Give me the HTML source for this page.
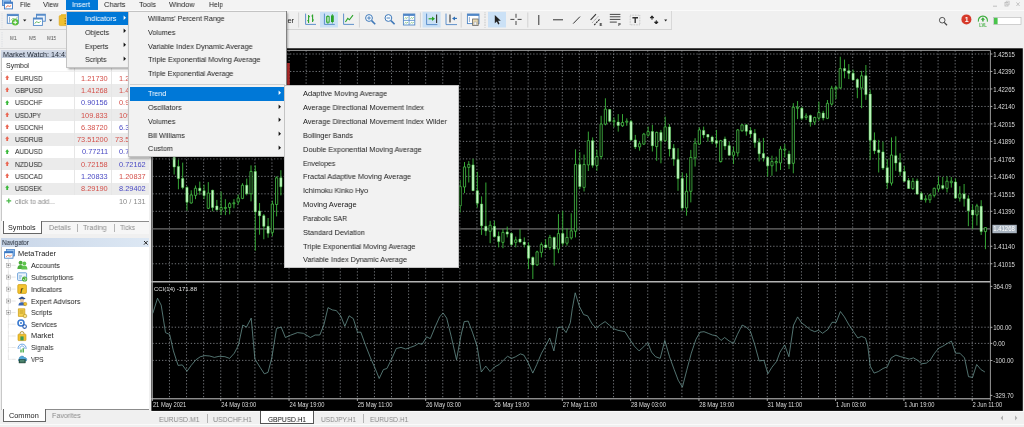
<!DOCTYPE html>
<html><head><meta charset="utf-8"><title>MetaTrader 5 - Insert Indicators Trend</title>
<style>
html,body{margin:0;padding:0}
body{width:1024px;height:427px;position:relative;overflow:hidden;background:#f0f0f0;font-family:"Liberation Sans",sans-serif;}
.t{position:absolute;white-space:nowrap;transform-origin:0 50%;display:block;will-change:transform}
.b{position:absolute;box-sizing:border-box}
svg{position:absolute;left:0;top:0;overflow:visible}
.menu{background:#f2f2f2;border:0.6px solid #c4c4c4;box-shadow:1.8px 1.8px 2.2px rgba(0,0,0,0.38)}
.hl{background:#0078d7}
</style></head><body>

<svg id="chart" width="1024" height="427" viewBox="0 0 1024 427" font-family="Liberation Sans, sans-serif">
<rect x="151.4" y="48.3" width="871.4" height="362.6" fill="#000"/>
<path d="M169.48 50.4 V398.8 M186.56 50.4 V398.8 M203.64 50.4 V398.8 M220.72 50.4 V398.8 M237.80 50.4 V398.8 M254.88 50.4 V398.8 M271.96 50.4 V398.8 M289.04 50.4 V398.8 M306.12 50.4 V398.8 M323.20 50.4 V398.8 M340.28 50.4 V398.8 M357.36 50.4 V398.8 M374.44 50.4 V398.8 M391.52 50.4 V398.8 M408.60 50.4 V398.8 M425.68 50.4 V398.8 M442.76 50.4 V398.8 M459.84 50.4 V398.8 M476.92 50.4 V398.8 M494.00 50.4 V398.8 M511.08 50.4 V398.8 M528.16 50.4 V398.8 M545.24 50.4 V398.8 M562.32 50.4 V398.8 M579.40 50.4 V398.8 M596.48 50.4 V398.8 M613.56 50.4 V398.8 M630.64 50.4 V398.8 M647.72 50.4 V398.8 M664.80 50.4 V398.8 M681.88 50.4 V398.8 M698.96 50.4 V398.8 M716.04 50.4 V398.8 M733.12 50.4 V398.8 M750.20 50.4 V398.8 M767.28 50.4 V398.8 M784.36 50.4 V398.8 M801.44 50.4 V398.8 M818.52 50.4 V398.8 M835.60 50.4 V398.8 M852.68 50.4 V398.8 M869.76 50.4 V398.8 M886.84 50.4 V398.8 M903.92 50.4 V398.8 M921.00 50.4 V398.8 M938.08 50.4 V398.8 M955.16 50.4 V398.8 M972.24 50.4 V398.8 M152.4 54.00 H990.4 M152.4 71.48 H990.4 M152.4 88.96 H990.4 M152.4 106.44 H990.4 M152.4 123.92 H990.4 M152.4 141.40 H990.4 M152.4 158.88 H990.4 M152.4 176.36 H990.4 M152.4 193.84 H990.4 M152.4 211.32 H990.4 M152.4 246.28 H990.4 M152.4 263.76 H990.4 M152.4 327.2 H990.4 M152.4 343.4 H990.4 M152.4 360.4 H990.4" stroke="#84888c" stroke-width="0.85" stroke-dasharray="1.3 1.9" fill="none"/>
<path d="M152.4 398.8 V50.4 H990.4 V400.8" stroke="#a8a8a8" stroke-width="0.9" fill="none"/>
<path d="M151.4 281.8 H990.4" stroke="#b4b4b4" stroke-width="1.6" fill="none"/>
<path d="M151.4 398.8 H990.4" stroke="#c8c8c8" stroke-width="1" fill="none"/>
<path d="M152.4 228.9 H990.4" stroke="#6e6e6e" stroke-width="1.1" fill="none"/>
<path d="M174.15 150.0 V174.5 M178.42 159.6 V189.3 M182.69 162.6 V189.3 M186.96 186.2 V210.6 M191.23 190.3 V203.7 M195.50 185.5 V199.2 M199.77 181.6 V194.9 M204.04 184.7 V199.2 M208.31 182.1 V209.1 M212.58 189.7 V211.3 M216.85 199.9 V210.6 M221.12 191.5 V215.1 M225.39 199.2 V215.1 M229.66 202.2 V214.4 M233.93 199.2 V208.3 M238.20 194.6 V204.5 M242.47 183.2 V199.2 M246.74 178.6 V195.4 M251.01 165.4 V201.4 M255.28 165.4 V250.7 M259.55 203.0 V234.7 M263.82 214.0 V239.3 M268.09 218.0 V237.7 M272.36 200.7 V236.2 M276.63 176.3 V216.4 M280.90 170.2 V195.4 M460.24 180.0 V212.5 M464.51 162.0 V193.1 M468.78 161.1 V182.5 M473.05 158.7 V190.7 M477.32 171.8 V207.5 M481.59 196.4 V234.9 M485.86 182.5 V235.8 M490.13 220.8 V243.2 M494.40 220.8 V237.4 M498.67 231.6 V247.4 M502.94 229.1 V248.2 M507.21 226.6 V237.4 M511.48 232.4 V245.7 M515.75 236.6 V247.4 M520.02 229.1 V243.2 M524.29 237.4 V247.4 M528.56 242.4 V269.0 M532.83 256.5 V279.0 M537.10 250.7 V266.0 M541.37 242.4 V257.4 M545.64 239.1 V248.2 M549.91 234.9 V249.9 M554.18 236.6 V265.7 M558.45 214.1 V253.2 M562.72 210.8 V245.7 M566.99 228.3 V245.7 M571.26 213.3 V239.6 M575.53 149.3 V237.4 M579.80 152.1 V189.0 M584.07 154.6 V191.5 M588.34 131.6 V171.0 M592.61 137.4 V167.7 M596.88 149.8 V170.8 M601.15 115.8 V159.0 M605.42 98.3 V125.3 M609.69 109.1 V122.4 M613.96 117.4 V127.4 M618.23 114.1 V131.6 M622.50 114.1 V126.9 M626.77 118.3 V125.8 M631.04 119.9 V140.7 M635.31 134.9 V149.0 M639.58 141.6 V150.7 M643.85 132.9 V144.9 M648.12 126.6 V136.6 M652.39 124.9 V151.5 M656.66 131.6 V160.8 M660.93 129.9 V163.3 M665.20 116.6 V141.6 M669.47 124.1 V156.5 M673.74 144.1 V165.8 M678.01 148.2 V190.8 M682.28 172.5 V210.7 M686.55 173.3 V215.7 M690.82 149.9 V202.4 M695.09 138.2 V166.6 M699.36 127.4 V144.9 M703.63 126.6 V138.2 M707.90 134.1 V141.6 M712.17 135.7 V144.1 M716.44 129.9 V147.4 M720.71 139.9 V162.5 M724.98 136.6 V149.9 M729.25 141.6 V155.7 M733.52 146.6 V164.1 M737.79 129.1 V156.6 M742.06 124.1 V131.6 M746.33 124.1 V135.7 M750.60 127.4 V137.4 M754.87 129.1 V147.8 M759.14 138.3 V161.5 M763.41 137.9 V161.5 M767.68 156.6 V176.6 M771.95 155.7 V175.8 M776.22 156.6 V171.6 M780.49 146.2 V170.0 M784.76 144.1 V157.4 M789.03 150.7 V169.1 M793.30 103.1 V173.3 M797.57 101.0 V119.1 M801.84 106.7 V120.1 M806.11 113.3 V120.0 M810.38 114.6 V126.6 M814.65 116.6 V125.0 M818.92 101.7 V120.8 M823.19 110.8 V120.4 M827.46 100.0 V119.1 M831.73 85.8 V105.7 M836.00 85.8 V99.1 M840.27 56.7 V89.1 M844.54 59.6 V78.3 M848.81 64.1 V79.1 M853.08 69.6 V80.3 M857.35 78.3 V98.2 M861.62 70.8 V108.2 M865.89 65.0 V99.9 M870.16 89.9 V159.9 M874.43 132.4 V154.1 M878.70 139.9 V172.5 M882.97 141.6 V170.0 M887.24 159.0 V188.7 M891.51 137.4 V185.6 M895.78 136.3 V170.8 M900.05 153.2 V175.8 M904.32 165.8 V181.8 M908.59 178.0 V189.0 M912.86 178.0 V189.8 M917.13 178.7 V194.8 M921.40 191.8 V200.2 M925.67 195.3 V202.6 M929.94 193.9 V203.0 M934.21 187.6 V197.4 M938.48 176.3 V191.8 M942.75 177.0 V189.7 M947.02 176.3 V192.5 M951.29 177.0 V187.6 M955.56 178.4 V198.8 M959.83 186.2 V201.6 M964.10 184.0 V206.6 M968.37 195.3 V226.2 M972.64 204.5 V229.0 M976.91 203.8 V225.5 M981.18 200.2 V235.0 M985.45 227.0 V249.2" stroke="#38b038" stroke-width="0.95" fill="none"/>
<path d="M190.13 194.9 h2.2 V203.0 h-2.2 Z M194.40 188.2 h2.2 V195.4 h-2.2 Z M207.21 193.1 h2.2 V208.3 h-2.2 Z M220.02 207.5 h2.2 V210.1 h-2.2 Z M224.29 207.4 h2.2 V208.4 h-2.2 Z M228.56 203.7 h2.2 V207.5 h-2.2 Z M232.83 202.8 h2.2 V203.8 h-2.2 Z M237.10 198.1 h2.2 V201.9 h-2.2 Z M241.37 185.2 h2.2 V198.4 h-2.2 Z M249.91 171.4 h2.2 V193.8 h-2.2 Z M271.26 204.0 h2.2 V232.4 h-2.2 Z M275.53 177.8 h2.2 V204.5 h-2.2 Z M459.14 186.6 h2.2 V205.8 h-2.2 Z M463.41 166.9 h2.2 V187.0 h-2.2 Z M467.68 164.4 h2.2 V167.4 h-2.2 Z M489.03 225.3 h2.2 V231.3 h-2.2 Z M501.84 232.4 h2.2 V242.4 h-2.2 Z M514.65 239.9 h2.2 V242.4 h-2.2 Z M536.00 251.9 h2.2 V264.9 h-2.2 Z M540.27 244.6 h2.2 V252.4 h-2.2 Z M548.81 237.4 h2.2 V247.4 h-2.2 Z M557.35 233.6 h2.2 V249.1 h-2.2 Z M565.89 237.4 h2.2 V243.2 h-2.2 Z M570.16 230.8 h2.2 V237.9 h-2.2 Z M574.43 164.4 h2.2 V231.3 h-2.2 Z M582.97 164.4 h2.2 V187.4 h-2.2 Z M587.24 140.7 h2.2 V164.9 h-2.2 Z M595.78 156.5 h2.2 V165.5 h-2.2 Z M600.05 124.1 h2.2 V156.5 h-2.2 Z M604.32 109.1 h2.2 V124.1 h-2.2 Z M612.86 120.7 h2.2 V121.7 h-2.2 Z M621.40 122.4 h2.2 V125.8 h-2.2 Z M625.67 121.2 h2.2 V122.2 h-2.2 Z M638.48 143.7 h2.2 V146.9 h-2.2 Z M642.75 134.1 h2.2 V144.1 h-2.2 Z M647.02 131.6 h2.2 V135.2 h-2.2 Z M655.56 132.4 h2.2 V146.6 h-2.2 Z M664.10 126.9 h2.2 V140.7 h-2.2 Z M685.45 191.3 h2.2 V207.9 h-2.2 Z M689.72 157.4 h2.2 V191.3 h-2.2 Z M693.99 143.2 h2.2 V157.8 h-2.2 Z M698.26 129.9 h2.2 V144.1 h-2.2 Z M719.61 140.7 h2.2 V161.6 h-2.2 Z M732.42 151.8 h2.2 V155.3 h-2.2 Z M736.69 129.9 h2.2 V152.9 h-2.2 Z M740.96 124.9 h2.2 V130.8 h-2.2 Z M770.85 161.6 h2.2 V165.8 h-2.2 Z M775.12 161.5 h2.2 V162.9 h-2.2 Z M779.39 149.1 h2.2 V162.9 h-2.2 Z M783.66 149.0 h2.2 V150.0 h-2.2 Z M792.20 107.2 h2.2 V163.3 h-2.2 Z M796.47 107.2 h2.2 V108.3 h-2.2 Z M805.01 116.0 h2.2 V117.5 h-2.2 Z M813.55 117.5 h2.2 V122.0 h-2.2 Z M817.82 112.5 h2.2 V118.1 h-2.2 Z M826.36 103.3 h2.2 V118.3 h-2.2 Z M830.63 88.3 h2.2 V104.1 h-2.2 Z M834.90 87.4 h2.2 V88.6 h-2.2 Z M839.17 68.6 h2.2 V87.9 h-2.2 Z M860.52 75.8 h2.2 V87.9 h-2.2 Z M890.41 155.0 h2.2 V183.1 h-2.2 Z M911.76 181.4 h2.2 V188.6 h-2.2 Z M924.57 198.8 h2.2 V199.8 h-2.2 Z M928.84 195.0 h2.2 V199.8 h-2.2 Z M933.11 188.3 h2.2 V195.3 h-2.2 Z M937.38 184.8 h2.2 V189.0 h-2.2 Z M945.92 181.2 h2.2 V188.3 h-2.2 Z M950.19 181.2 h2.2 V182.7 h-2.2 Z M958.73 193.9 h2.2 V198.1 h-2.2 Z M975.81 205.9 h2.2 V215.0 h-2.2 Z M984.35 227.6 h2.2 V231.6 h-2.2 Z" stroke="#4ccc4c" stroke-width="0.75" fill="#000"/>
<path d="M173.05 150.0 h2.2 V166.9 h-2.2 Z M177.32 166.4 h2.2 V178.6 h-2.2 Z M181.59 178.6 h2.2 V187.4 h-2.2 Z M185.86 187.4 h2.2 V202.2 h-2.2 Z M198.67 188.2 h2.2 V190.8 h-2.2 Z M202.94 190.8 h2.2 V195.4 h-2.2 Z M211.48 190.3 h2.2 V207.5 h-2.2 Z M215.75 206.0 h2.2 V209.8 h-2.2 Z M245.64 185.2 h2.2 V193.8 h-2.2 Z M254.18 171.4 h2.2 V211.9 h-2.2 Z M258.45 211.0 h2.2 V215.7 h-2.2 Z M262.72 215.7 h2.2 V226.3 h-2.2 Z M266.99 226.3 h2.2 V233.2 h-2.2 Z M279.80 177.8 h2.2 V186.7 h-2.2 Z M471.95 164.9 h2.2 V190.7 h-2.2 Z M476.22 190.7 h2.2 V203.3 h-2.2 Z M480.49 204.1 h2.2 V225.8 h-2.2 Z M484.76 226.3 h2.2 V230.8 h-2.2 Z M493.30 226.3 h2.2 V236.6 h-2.2 Z M497.57 236.3 h2.2 V241.6 h-2.2 Z M506.11 231.9 h2.2 V234.1 h-2.2 Z M510.38 233.6 h2.2 V244.6 h-2.2 Z M518.92 239.1 h2.2 V241.9 h-2.2 Z M523.19 242.1 h2.2 V244.6 h-2.2 Z M527.46 245.7 h2.2 V258.2 h-2.2 Z M531.73 257.4 h2.2 V264.9 h-2.2 Z M544.54 244.9 h2.2 V247.4 h-2.2 Z M553.08 237.4 h2.2 V249.1 h-2.2 Z M561.62 233.6 h2.2 V243.2 h-2.2 Z M578.70 164.4 h2.2 V186.6 h-2.2 Z M591.51 140.7 h2.2 V165.2 h-2.2 Z M608.59 109.6 h2.2 V121.3 h-2.2 Z M617.13 122.1 h2.2 V125.4 h-2.2 Z M629.94 121.6 h2.2 V139.9 h-2.2 Z M634.21 139.9 h2.2 V146.9 h-2.2 Z M651.29 131.6 h2.2 V145.7 h-2.2 Z M659.83 132.4 h2.2 V140.7 h-2.2 Z M668.37 126.9 h2.2 V149.0 h-2.2 Z M672.64 148.2 h2.2 V159.1 h-2.2 Z M676.91 159.6 h2.2 V178.6 h-2.2 Z M681.18 178.6 h2.2 V207.9 h-2.2 Z M702.53 130.4 h2.2 V134.9 h-2.2 Z M706.80 134.6 h2.2 V137.1 h-2.2 Z M711.07 137.1 h2.2 V141.6 h-2.2 Z M715.34 140.7 h2.2 V143.2 h-2.2 Z M723.88 139.1 h2.2 V146.1 h-2.2 Z M728.15 145.7 h2.2 V155.2 h-2.2 Z M745.23 124.9 h2.2 V131.3 h-2.2 Z M749.50 130.5 h2.2 V133.9 h-2.2 Z M753.77 133.3 h2.2 V142.6 h-2.2 Z M758.04 142.4 h2.2 V153.8 h-2.2 Z M762.31 153.6 h2.2 V157.9 h-2.2 Z M766.58 157.4 h2.2 V165.8 h-2.2 Z M787.93 154.1 h2.2 V164.1 h-2.2 Z M800.74 108.3 h2.2 V118.3 h-2.2 Z M809.28 115.6 h2.2 V122.0 h-2.2 Z M822.09 113.1 h2.2 V118.0 h-2.2 Z M843.44 68.6 h2.2 V70.8 h-2.2 Z M847.71 70.8 h2.2 V73.3 h-2.2 Z M851.98 73.3 h2.2 V79.9 h-2.2 Z M856.25 79.6 h2.2 V87.4 h-2.2 Z M864.79 75.8 h2.2 V94.6 h-2.2 Z M869.06 94.1 h2.2 V140.2 h-2.2 Z M873.33 140.2 h2.2 V150.7 h-2.2 Z M877.60 149.9 h2.2 V152.4 h-2.2 Z M881.87 151.9 h2.2 V168.1 h-2.2 Z M886.14 167.7 h2.2 V182.8 h-2.2 Z M894.68 155.7 h2.2 V163.0 h-2.2 Z M898.95 162.5 h2.2 V171.8 h-2.2 Z M903.22 171.6 h2.2 V181.2 h-2.2 Z M907.49 180.6 h2.2 V188.5 h-2.2 Z M916.03 180.9 h2.2 V194.0 h-2.2 Z M920.30 193.6 h2.2 V199.5 h-2.2 Z M941.65 185.5 h2.2 V188.3 h-2.2 Z M954.46 182.0 h2.2 V198.1 h-2.2 Z M963.00 193.9 h2.2 V198.8 h-2.2 Z M967.27 198.8 h2.2 V210.8 h-2.2 Z M971.54 210.1 h2.2 V215.0 h-2.2 Z M980.08 206.3 h2.2 V231.6 h-2.2 Z" stroke="#5cd85c" stroke-width="0.5" fill="#c6f8c6"/>
<polyline points="152.8,313.4 157.5,298.2 161.2,305.2 165.5,332.6 169.7,334.5 173.4,350.9 178.1,365.4 182.3,364.9 187.0,371.3 191.2,365.4 195.9,359.8 200.4,356.7 205.0,355.6 209.7,356.0 214.4,357.4 219.1,356.3 224.9,356.7 229.6,358.4 234.3,353.2 238.5,345.0 242.7,325.1 246.5,327.0 251.2,318.1 254.9,359.1 260.1,367.3 264.3,373.8 268.0,372.4 271.8,357.9 276.5,328.6 281.1,327.0 285.4,337.5 290.5,335.2 297.5,332.6 303.4,333.3 310.4,337.5 315.1,335.0 319.8,335.0 323.8,325.1 328.0,307.6 332.2,309.9 336.4,310.6 340.9,316.2 344.8,326.3 349.1,315.8 353.3,318.6 357.5,332.2 360.8,332.2 365.9,346.2 370.5,357.9 375.2,368.5 379.2,378.5 383.4,369.6 386.9,368.5 391.6,359.1 396.3,348.5 401.0,347.4 405.7,349.0 410.4,347.4 415.0,345.7 418.5,343.4 422.1,344.3 426.7,336.8 430.3,338.7 434.9,327.5 439.6,316.9 443.1,313.0 446.7,318.1 451.3,336.8 456.5,359.8 460.7,336.8 464.2,321.6 468.2,321.1 472.4,332.2 477.1,346.2 481.3,372.0 485.8,366.1 490.0,371.5 494.7,366.8 499.3,364.5 503.3,360.3 507.5,356.3 511.8,358.4 515.7,356.7 520.4,353.9 523.9,355.1 528.1,362.6 532.8,373.1 536.8,364.5 541.5,353.2 546.2,345.0 549.7,338.0 553.9,350.9 557.9,327.5 561.9,327.0 566.1,332.6 570.3,322.8 572.3,308.7 575.2,292.8 579.4,306.4 583.6,314.6 587.6,315.8 592.2,324.0 596.2,328.2 600.4,324.7 605.1,321.6 609.3,325.1 613.3,328.6 618.0,330.3 625.0,331.7 629.7,339.2 634.4,346.2 639.1,350.9 643.8,346.7 647.8,342.7 651.5,352.1 655.5,356.7 660.2,358.4 664.8,340.4 669.5,356.7 674.2,369.6 678.2,380.2 682.4,387.2 686.6,370.8 691.3,353.2 696.0,339.2 700.0,332.2 704.0,331.7 708.2,333.3 712.4,335.0 716.4,335.7 721.1,340.4 724.6,337.5 729.3,341.1 733.5,343.4 737.4,334.5 742.1,325.1 746.1,327.0 750.3,331.0 754.5,343.9 759.2,361.0 763.9,360.3 767.9,373.8 771.9,367.3 776.6,361.4 780.0,352.1 784.7,345.0 788.9,356.7 793.6,325.1 797.6,316.9 801.5,322.8 806.2,326.3 810.4,329.8 814.7,331.7 818.6,330.3 822.6,333.3 828.0,329.3 832.0,322.3 836.2,322.3 840.4,311.5 844.4,316.9 849.1,325.1 853.8,332.2 857.8,338.0 861.5,336.4 865.5,338.0 867.8,346.2 870.2,366.1 874.1,373.1 878.4,371.5 883.0,368.5 887.3,366.8 891.2,357.9 895.9,355.1 900.6,356.7 905.3,357.9 909.3,359.1 913.5,357.9 917.7,360.3 921.7,363.8 926.4,363.1 930.4,359.8 934.6,353.2 938.8,348.1 942.8,346.2 947.4,343.4 951.4,341.1 955.6,353.2 959.9,353.2 964.5,357.9 968.5,376.7 972.5,377.4 976.7,364.5 980.9,369.6 984.9,372.0" stroke="#6e9894" stroke-width="0.75" fill="none" stroke-linejoin="round"/>
<rect x="286.4" y="63" width="3.3" height="21.8" fill="#b82c2c"/>
</svg>
<svg id="chartlabels" style="will-change:transform" width="1024" height="427" viewBox="0 0 1024 427" font-family="Liberation Sans, sans-serif">
<path d="M990.4 54.00 h2" stroke="#ccc" stroke-width="0.8"/>
<text x="993.2" y="56.90" font-size="6.6" fill="#dcdcdc" textLength="21.6" lengthAdjust="spacingAndGlyphs">1.42515</text>
<path d="M990.4 71.48 h2" stroke="#ccc" stroke-width="0.8"/>
<text x="993.2" y="74.38" font-size="6.6" fill="#dcdcdc" textLength="21.6" lengthAdjust="spacingAndGlyphs">1.42390</text>
<path d="M990.4 88.96 h2" stroke="#ccc" stroke-width="0.8"/>
<text x="993.2" y="91.86" font-size="6.6" fill="#dcdcdc" textLength="21.6" lengthAdjust="spacingAndGlyphs">1.42265</text>
<path d="M990.4 106.44 h2" stroke="#ccc" stroke-width="0.8"/>
<text x="993.2" y="109.34" font-size="6.6" fill="#dcdcdc" textLength="21.6" lengthAdjust="spacingAndGlyphs">1.42140</text>
<path d="M990.4 123.92 h2" stroke="#ccc" stroke-width="0.8"/>
<text x="993.2" y="126.82" font-size="6.6" fill="#dcdcdc" textLength="21.6" lengthAdjust="spacingAndGlyphs">1.42015</text>
<path d="M990.4 141.40 h2" stroke="#ccc" stroke-width="0.8"/>
<text x="993.2" y="144.30" font-size="6.6" fill="#dcdcdc" textLength="21.6" lengthAdjust="spacingAndGlyphs">1.41890</text>
<path d="M990.4 158.88 h2" stroke="#ccc" stroke-width="0.8"/>
<text x="993.2" y="161.78" font-size="6.6" fill="#dcdcdc" textLength="21.6" lengthAdjust="spacingAndGlyphs">1.41765</text>
<path d="M990.4 176.36 h2" stroke="#ccc" stroke-width="0.8"/>
<text x="993.2" y="179.26" font-size="6.6" fill="#dcdcdc" textLength="21.6" lengthAdjust="spacingAndGlyphs">1.41640</text>
<path d="M990.4 193.84 h2" stroke="#ccc" stroke-width="0.8"/>
<text x="993.2" y="196.74" font-size="6.6" fill="#dcdcdc" textLength="21.6" lengthAdjust="spacingAndGlyphs">1.41515</text>
<path d="M990.4 211.32 h2" stroke="#ccc" stroke-width="0.8"/>
<text x="993.2" y="214.22" font-size="6.6" fill="#dcdcdc" textLength="21.6" lengthAdjust="spacingAndGlyphs">1.41390</text>
<path d="M990.4 246.28 h2" stroke="#ccc" stroke-width="0.8"/>
<text x="993.2" y="249.18" font-size="6.6" fill="#dcdcdc" textLength="21.6" lengthAdjust="spacingAndGlyphs">1.41140</text>
<path d="M990.4 263.76 h2" stroke="#ccc" stroke-width="0.8"/>
<text x="993.2" y="266.66" font-size="6.6" fill="#dcdcdc" textLength="21.6" lengthAdjust="spacingAndGlyphs">1.41015</text>
<rect x="992.4" y="224.8" width="24.4" height="8.4" fill="#a9b4c0"/>
<text x="993.2" y="231.4" font-size="6.6" fill="#fff" textLength="21.6" lengthAdjust="spacingAndGlyphs">1.41268</text>
<path d="M990.4 286.40 h2" stroke="#ccc" stroke-width="0.8"/>
<text x="993.2" y="288.80" font-size="6.6" fill="#dcdcdc" textLength="18.5" lengthAdjust="spacingAndGlyphs">364.09</text>
<path d="M990.4 327.30 h2" stroke="#ccc" stroke-width="0.8"/>
<text x="993.2" y="329.70" font-size="6.6" fill="#dcdcdc" textLength="18.5" lengthAdjust="spacingAndGlyphs">100.00</text>
<path d="M990.4 343.40 h2" stroke="#ccc" stroke-width="0.8"/>
<text x="993.2" y="345.80" font-size="6.6" fill="#dcdcdc" textLength="11.8" lengthAdjust="spacingAndGlyphs">0.00</text>
<path d="M990.4 360.50 h2" stroke="#ccc" stroke-width="0.8"/>
<text x="993.2" y="362.90" font-size="6.6" fill="#dcdcdc" textLength="20.5" lengthAdjust="spacingAndGlyphs">-100.00</text>
<path d="M990.4 395.40 h2" stroke="#ccc" stroke-width="0.8"/>
<text x="993.2" y="397.80" font-size="6.6" fill="#dcdcdc" textLength="20.5" lengthAdjust="spacingAndGlyphs">-329.70</text>
<text x="154" y="291.4" font-size="6.2" fill="#e0e0e0" textLength="43" lengthAdjust="spacingAndGlyphs">CCI(14) -171.88</text>
<path d="M152.40 398.8 v2.2" stroke="#ccc" stroke-width="0.8"/>
<text x="152.9" y="407" font-size="6.4" fill="#dcdcdc" textLength="33.4" lengthAdjust="spacingAndGlyphs">21 May 2021</text>
<path d="M220.72 398.8 v2.2" stroke="#ccc" stroke-width="0.8"/>
<text x="221.2" y="407" font-size="6.4" fill="#dcdcdc" textLength="35.0" lengthAdjust="spacingAndGlyphs">24 May 03:00</text>
<path d="M289.04 398.8 v2.2" stroke="#ccc" stroke-width="0.8"/>
<text x="289.5" y="407" font-size="6.4" fill="#dcdcdc" textLength="35.0" lengthAdjust="spacingAndGlyphs">24 May 19:00</text>
<path d="M357.36 398.8 v2.2" stroke="#ccc" stroke-width="0.8"/>
<text x="357.8" y="407" font-size="6.4" fill="#dcdcdc" textLength="34.6" lengthAdjust="spacingAndGlyphs">25 May 11:00</text>
<path d="M425.68 398.8 v2.2" stroke="#ccc" stroke-width="0.8"/>
<text x="426.1" y="407" font-size="6.4" fill="#dcdcdc" textLength="35.0" lengthAdjust="spacingAndGlyphs">26 May 03:00</text>
<path d="M494.00 398.8 v2.2" stroke="#ccc" stroke-width="0.8"/>
<text x="494.4" y="407" font-size="6.4" fill="#dcdcdc" textLength="35.0" lengthAdjust="spacingAndGlyphs">26 May 19:00</text>
<path d="M562.32 398.8 v2.2" stroke="#ccc" stroke-width="0.8"/>
<text x="562.7" y="407" font-size="6.4" fill="#dcdcdc" textLength="34.6" lengthAdjust="spacingAndGlyphs">27 May 11:00</text>
<path d="M630.64 398.8 v2.2" stroke="#ccc" stroke-width="0.8"/>
<text x="631.0" y="407" font-size="6.4" fill="#dcdcdc" textLength="35.0" lengthAdjust="spacingAndGlyphs">28 May 03:00</text>
<path d="M698.96 398.8 v2.2" stroke="#ccc" stroke-width="0.8"/>
<text x="699.3" y="407" font-size="6.4" fill="#dcdcdc" textLength="35.0" lengthAdjust="spacingAndGlyphs">28 May 19:00</text>
<path d="M767.28 398.8 v2.2" stroke="#ccc" stroke-width="0.8"/>
<text x="767.6" y="407" font-size="6.4" fill="#dcdcdc" textLength="34.6" lengthAdjust="spacingAndGlyphs">31 May 11:00</text>
<path d="M835.60 398.8 v2.2" stroke="#ccc" stroke-width="0.8"/>
<text x="835.9" y="407" font-size="6.4" fill="#dcdcdc" textLength="30.2" lengthAdjust="spacingAndGlyphs">1 Jun 03:00</text>
<path d="M903.92 398.8 v2.2" stroke="#ccc" stroke-width="0.8"/>
<text x="904.2" y="407" font-size="6.4" fill="#dcdcdc" textLength="30.2" lengthAdjust="spacingAndGlyphs">1 Jun 19:00</text>
<path d="M972.24 398.8 v2.2" stroke="#ccc" stroke-width="0.8"/>
<text x="972.5" y="407" font-size="6.4" fill="#dcdcdc" textLength="29.8" lengthAdjust="spacingAndGlyphs">2 Jun 11:00</text>
</svg>
<div class="b " style="left:0.00px;top:0.00px;width:1024.00px;height:10.50px;background:#f3f3f3"></div>
<div class="b " style="left:0.00px;top:10.30px;width:1024.00px;height:0.60px;background:#fafafa"></div>
<div class="b hl" style="left:66.00px;top:0.00px;width:31.70px;height:10.40px;"></div>
<span class="t" style="left:20.00px;top:0.31px;font-size:7.6px;line-height:9.12px;color:#222;transform:scaleX(0.8574);">File</span>
<span class="t" style="left:43.00px;top:0.31px;font-size:7.6px;line-height:9.12px;color:#222;transform:scaleX(0.9488);">View</span>
<span class="t" style="left:72.00px;top:0.31px;font-size:7.6px;line-height:9.12px;color:#fff;transform:scaleX(0.9470);">Insert</span>
<span class="t" style="left:104.00px;top:0.31px;font-size:7.6px;line-height:9.12px;color:#222;transform:scaleX(0.9605);">Charts</span>
<span class="t" style="left:139.00px;top:0.31px;font-size:7.6px;line-height:9.12px;color:#222;transform:scaleX(0.9582);">Tools</span>
<span class="t" style="left:169.00px;top:0.31px;font-size:7.6px;line-height:9.12px;color:#222;transform:scaleX(0.9434);">Window</span>
<span class="t" style="left:208.50px;top:0.31px;font-size:7.6px;line-height:9.12px;color:#222;transform:scaleX(0.8957);">Help</span>
<svg width="14" height="10" style="left:0;top:0"><rect x="2.4" y="-1" width="8" height="6.4" fill="#8fbcea" stroke="#3b78c4" stroke-width="0.8"/><rect x="4.5" y="2.1" width="8" height="6.8" fill="#fff" stroke="#3b78c4" stroke-width="0.9"/><rect x="4.5" y="2.1" width="8" height="1.7" fill="#3b78c4"/><path d="M6 7.6 q1.4 -2.8 2.6 -1.6 t2.6 -0.6" stroke="#e0603a" stroke-width="0.9" fill="none"/></svg>
<svg width="40" height="10" style="left:984px;top:0"><path d="M9 6.2 h4" stroke="#b8b8b8" stroke-width="0.9"/><rect x="21" y="2.4" width="3" height="3.6" fill="none" stroke="#b8b8b8" stroke-width="0.8"/><rect x="22.2" y="1.2" width="3" height="3.6" fill="none" stroke="#c4c4c4" stroke-width="0.7"/><path d="M32.4 2.4 l3.2 3.6 m0 -3.6 l-3.2 3.6" stroke="#b8b8b8" stroke-width="0.8"/></svg>
<div class="b " style="left:0.00px;top:29.00px;width:671.50px;height:0.60px;background:#d4d4d4"></div>
<div class="b " style="left:671.00px;top:11.00px;width:0.60px;height:18.40px;background:#d8d8d8"></div>
<div class="b " style="left:0.00px;top:48.00px;width:151.00px;height:0.60px;background:#d9d9d9"></div>
<svg width="3" height="40" style="left:0.8px;top:11px"><path d="M1 2 V17 M1 21 V36" stroke="#d4d8de" stroke-width="1" stroke-dasharray="0.8 1"/></svg>
<svg width="1024" height="50" viewBox="0 0 1024 50" font-family="Liberation Sans, sans-serif">
<rect x="7.3" y="14.3" width="11" height="9" fill="#fff" stroke="#4f86c6" stroke-width="0.9"/><rect x="7.3" y="14.3" width="11" height="1.8" fill="#4f86c6"/><path d="M9.5 17 v5.5" stroke="#6a8fb8" stroke-width="0.7"/><path d="M11 20.4 q1.6 -3 3.2 -1.6 t3 -1.6" stroke="#58b048" stroke-width="0.7" fill="none"/><circle cx="15.2" cy="22.3" r="3.3" fill="#58c038"/><path d="M13.3 22.3 h3.8 M15.2 20.4 v3.8" stroke="#fff" stroke-width="1"/>
<path d="M23 19.4 h3.4 l-1.7 2 z" fill="#222"/>
<rect x="36.5" y="14.2" width="8.8" height="7" fill="#e8f0fa" stroke="#4f86c6" stroke-width="0.9"/><rect x="36.5" y="14.2" width="8.8" height="1.5" fill="#4f86c6"/><rect x="33.4" y="18" width="9" height="7.4" fill="#fff" stroke="#4f86c6" stroke-width="0.9"/><rect x="33.4" y="18" width="9" height="1.5" fill="#4f86c6"/><path d="M34.8 23.6 q1.4 -3 2.8 -1.4 t3 -1" stroke="#48a848" stroke-width="0.8" fill="none"/>
<path d="M49 19.4 h3.4 l-1.7 2 z" fill="#222"/>
<rect x="59.2" y="15.6" width="8" height="10" rx="1" fill="#f0c030" stroke="#d8a010" stroke-width="0.6"/><rect x="61" y="14.2" width="6" height="2" fill="#e8b828"/><path d="M64.6 18.4 h2 M64.6 21 h2 M64.6 23.4 h2" stroke="#8a6a10" stroke-width="0.9"/>
<text x="287.4" y="23.4" font-size="7.6" fill="#222">er</text>
<path d="M298.6 12.5 V27.5 M359.4 12.5 V27.5 M420.4 12.5 V27.5 M461.2 12.5 V27.5 M527.8 12.5 V27.5" stroke="#c6c6c6" stroke-width="0.7"/>
<path d="M485 12.5 V27.5" stroke="#c0c0c0" stroke-width="1.2" stroke-dasharray="0.7 0.9"/>
<rect x="320" y="11.8" width="18" height="15.7" fill="#cbe1f6"/>
<rect x="422.5" y="11.8" width="18.100000000000023" height="15.7" fill="#cbe1f6"/>
<rect x="488" y="11.8" width="18" height="15.7" fill="#cbe1f6"/>
<path d="M305.6 13.6 V24.4 H316" stroke="#4f86c6" stroke-width="0.9" fill="none"/><path d="M308.6 15 V23 M307.4 20.6 h1.2 M308.6 16.6 h1.2 M312.6 14.4 V22 M311.4 16 h1.2 M312.6 20 h1.4" stroke="#28a428" stroke-width="1.1" fill="none"/>
<path d="M324.4 13.6 V24.4 H334.8" stroke="#4f86c6" stroke-width="0.9" fill="none"/><rect x="326.6" y="16.6" width="2.6" height="5.6" fill="#fff" stroke="#28a428" stroke-width="0.9"/><rect x="331" y="15.4" width="2.8" height="6.6" fill="#28a428"/><path d="M327.9 15 v9 M332.4 14 v9.4" stroke="#28a428" stroke-width="0.7"/>
<path d="M343.6 13.6 V24.4 H354" stroke="#4f86c6" stroke-width="0.9" fill="none"/><path d="M345.4 22 l2.4 -3.6 l1.6 1.4 l3.6 -4.6" stroke="#28a428" stroke-width="1.1" fill="none"/>
<circle cx="369" cy="18" r="3.4" fill="#f6fbff" stroke="#3f78b8" stroke-width="1"/><path d="M371.6 20.6 l3.6 3.6" stroke="#3f78b8" stroke-width="1.6"/><path d="M367.2 18 h3.6 M369 16.2 v3.6" stroke="#3f78b8" stroke-width="0.9"/>
<circle cx="388.4" cy="18" r="3.4" fill="#f6fbff" stroke="#3f78b8" stroke-width="1"/><path d="M391 20.6 l3.6 3.6" stroke="#3f78b8" stroke-width="1.6"/><path d="M386.6 18 h3.6" stroke="#3f78b8" stroke-width="0.9"/>
<rect x="403.4" y="14" width="11.4" height="11" fill="#fff" stroke="#4f86c6" stroke-width="0.9"/><rect x="403.4" y="14" width="11.4" height="1.9" fill="#4f86c6"/><path d="M409.1 15 V25 M403.4 20.4 H414.8" stroke="#4f86c6" stroke-width="0.8"/><path d="M404.6 18.6 l1.2 -1 l1 0.8 l1.2 -1.2 M410.4 18.6 l1.2 -1 l1 0.8 l1.2 -1.2 M404.6 23.4 l1.2 -1 l1 0.8 l1.2 -1.2 M410.4 23.4 l1.2 -1 l1 0.8 l1.2 -1.2" stroke="#48a848" stroke-width="0.6" fill="none"/>
<path d="M426.6 13.6 V24.6 H437.4" stroke="#4f86c6" stroke-width="0.9" fill="none"/><path d="M436.6 14.6 V23" stroke="#333" stroke-width="1.1"/><path d="M428.6 18.8 h4" stroke="#28a428" stroke-width="1.2"/><path d="M432 16.6 l3 2.2 l-3 2.2 z" fill="#28a428"/>
<path d="M446 13.6 V24.6 H457" stroke="#4f86c6" stroke-width="0.9" fill="none"/><path d="M450 14.6 V22.6" stroke="#333" stroke-width="1.1"/><path d="M454 18.4 h3" stroke="#2f70b8" stroke-width="1.1"/><path d="M455 16.4 l-3 2 l3 2 z" fill="#2f70b8"/>
<rect x="467.4" y="14" width="11.6" height="9.6" fill="#fff" stroke="#4f86c6" stroke-width="0.9"/><rect x="467.4" y="14" width="11.6" height="1.9" fill="#4f86c6"/><path d="M469.4 17 v5" stroke="#6a8fb8" stroke-width="0.7"/><rect x="472.6" y="19" width="5.6" height="6.4" fill="#e8d8b0" stroke="#666" stroke-width="0.8"/><rect x="474" y="22" width="2.6" height="3" fill="#f8f8f8" stroke="#888" stroke-width="0.4"/>
<path d="M494.8 15 v8.2 l2 -1.8 l1.4 3 l1.3 -0.6 l-1.4 -3 h2.7 z" fill="#222"/>
<path d="M516 13.8 v4 M516 21 v4 M510.4 19.4 h4 M517.6 19.4 h4" stroke="#333" stroke-width="0.9"/>
<path d="M538.8 15 V25" stroke="#333" stroke-width="1"/><path d="M553 19.8 H563" stroke="#333" stroke-width="1"/><path d="M573.2 23.6 L580 16.6" stroke="#333" stroke-width="1"/>
<path d="M590.6 19.8 L596 14.2" stroke="#333" stroke-width="1.1"/><path d="M594.2 25 L599.8 19" stroke="#333" stroke-width="1.1" stroke-dasharray="2 0.9"/><path d="M592.4 22.6 L598 16.6" stroke="#666" stroke-width="0.8" stroke-dasharray="1 0.9"/><text x="599.4" y="25.6" font-size="4.2" font-weight="bold" fill="#222">E</text>
<path d="M609.8 14.4 H620.4 M609.8 19.4 H620.4 M609.8 22.1 H616.8" stroke="#333" stroke-width="0.9"/><path d="M609.8 16.7 H620.4" stroke="#777" stroke-width="1.4"/><text x="618.2" y="25.8" font-size="4.4" font-weight="bold" fill="#222">F</text>
<rect x="630.2" y="15.2" width="9.6" height="9.6" fill="none" stroke="#999" stroke-width="0.6" stroke-dasharray="0.8 0.8"/><path d="M632.4 17.7 H638 M635.2 17.7 V23" stroke="#333" stroke-width="1.4" fill="none"/>
<path d="M652 16.4 v3.4 M650.2 17.8 l1.8 -2 l1.8 2 z M656.3 20.2 v3.4 M654.5 22 l1.8 2 l1.8 -2 z" stroke="#222" stroke-width="0.9" fill="#222"/><path d="M664.2 19.6 h3 l-1.5 1.8 z" fill="#222"/>
<circle cx="942.2" cy="20.2" r="2.8" fill="none" stroke="#444" stroke-width="0.9"/><path d="M944.2 22.4 l2.8 2.8" stroke="#444" stroke-width="1.3"/>
<circle cx="966.4" cy="19.4" r="5" fill="#d63a2a"/><text x="964.7" y="22" font-size="7" font-weight="bold" fill="#fff">1</text>
<path d="M978.4 21.6 a4.6 4.6 0 1 1 9 0" stroke="#3fae3f" stroke-width="1.2" fill="none"/><path d="M982.9 17.2 l2.2 2.6 h-1.4 v1.6 h-1.6 v-1.6 h-1.4 z" fill="#3fae3f"/><text x="979.2" y="27" font-size="4.6" font-weight="bold" fill="#3fae3f" textLength="7.6" lengthAdjust="spacingAndGlyphs">LVL</text>
<rect x="993.6" y="17.4" width="27.4" height="7.2" fill="#fff" stroke="#bdbdbd" stroke-width="0.7"/><rect x="994" y="17.8" width="3.6" height="6.4" fill="#49c44b"/>
</svg>
<span class="t" style="left:9.80px;top:35.20px;font-size:5.6px;line-height:6.72px;color:#555;transform:scaleX(0.8227);">M1</span>
<span class="t" style="left:29.00px;top:35.20px;font-size:5.6px;line-height:6.72px;color:#555;transform:scaleX(0.8998);">M5</span>
<span class="t" style="left:46.80px;top:35.20px;font-size:5.6px;line-height:6.72px;color:#555;transform:scaleX(0.8445);">M15</span>
<div class="b " style="left:1.40px;top:49.60px;width:147.40px;height:188.40px;background:#fff;border-left:0.7px solid #c8c8c8"></div>
<div class="b " style="left:1.40px;top:49.80px;width:147.40px;height:8.70px;background:linear-gradient(#d4dbe8,#c3cddd)"></div>
<span class="t" style="left:3.20px;top:50.87px;font-size:7px;line-height:8.40px;color:#1c2430;transform:scaleX(1.0263);">Market Watch: 14:41:08</span>
<span class="t" style="left:6.00px;top:61.87px;font-size:7px;line-height:8.40px;color:#222;transform:scaleX(0.9853);">Symbol</span>
<div class="b " style="left:1.40px;top:70.60px;width:147.40px;height:0.50px;background:#f2f2f2"></div>
<svg width="6" height="7" style="left:5.2px;top:75.00px"><path d="M2.2 0.3 L4.2 2.7 H3.1 V4.9 H1.3 V2.7 H0.2 Z" fill="#ea6450"/></svg>
<span class="t" style="left:14.80px;top:74.87px;font-size:7px;line-height:8.40px;color:#222;transform:scaleX(0.9400);">EURUSD</span>
<span class="t" style="left:81.45px;top:74.50px;font-size:7.4px;line-height:8.88px;color:#d4504a;">1.21730</span>
<span class="t" style="left:118.65px;top:74.50px;font-size:7.4px;line-height:8.88px;color:#d4504a;">1.21730</span>
<div class="b " style="left:2.00px;top:84.37px;width:146.80px;height:12.30px;background:#ebebeb"></div>
<svg width="6" height="7" style="left:5.2px;top:87.27px"><path d="M2.2 0.3 L4.2 2.7 H3.1 V4.9 H1.3 V2.7 H0.2 Z" fill="#ea6450"/></svg>
<span class="t" style="left:14.80px;top:86.87px;font-size:7px;line-height:8.40px;color:#222;transform:scaleX(0.9400);">GBPUSD</span>
<span class="t" style="left:81.45px;top:86.50px;font-size:7.4px;line-height:8.88px;color:#d4504a;">1.41268</span>
<span class="t" style="left:118.65px;top:86.50px;font-size:7.4px;line-height:8.88px;color:#d4504a;">1.41284</span>
<svg width="6" height="7" style="left:5.2px;top:99.54px"><path d="M2.2 0.3 L4.2 2.7 H3.1 V4.9 H1.3 V2.7 H0.2 Z" fill="#38b838"/></svg>
<span class="t" style="left:14.80px;top:98.87px;font-size:7px;line-height:8.40px;color:#222;transform:scaleX(0.9400);">USDCHF</span>
<span class="t" style="left:81.45px;top:98.50px;font-size:7.4px;line-height:8.88px;color:#4a4ac4;">0.90156</span>
<span class="t" style="left:118.65px;top:98.50px;font-size:7.4px;line-height:8.88px;color:#d4504a;">0.90170</span>
<div class="b " style="left:2.00px;top:108.91px;width:146.80px;height:12.30px;background:#ebebeb"></div>
<svg width="6" height="7" style="left:5.2px;top:111.81px"><path d="M2.2 0.3 L4.2 2.7 H3.1 V4.9 H1.3 V2.7 H0.2 Z" fill="#ea6450"/></svg>
<span class="t" style="left:14.80px;top:111.87px;font-size:7px;line-height:8.40px;color:#222;transform:scaleX(0.9400);">USDJPY</span>
<span class="t" style="left:81.45px;top:111.50px;font-size:7.4px;line-height:8.88px;color:#d4504a;">109.833</span>
<span class="t" style="left:118.65px;top:111.50px;font-size:7.4px;line-height:8.88px;color:#d4504a;">109.846</span>
<svg width="6" height="7" style="left:5.2px;top:124.08px"><path d="M2.2 0.3 L4.2 2.7 H3.1 V4.9 H1.3 V2.7 H0.2 Z" fill="#ea6450"/></svg>
<span class="t" style="left:14.80px;top:123.87px;font-size:7px;line-height:8.40px;color:#222;transform:scaleX(0.9400);">USDCNH</span>
<span class="t" style="left:81.45px;top:123.50px;font-size:7.4px;line-height:8.88px;color:#d4504a;">6.38720</span>
<span class="t" style="left:118.65px;top:123.50px;font-size:7.4px;line-height:8.88px;color:#4a4ac4;">6.38790</span>
<div class="b " style="left:2.00px;top:133.45px;width:146.80px;height:12.30px;background:#ebebeb"></div>
<svg width="6" height="7" style="left:5.2px;top:136.35px"><path d="M2.2 0.3 L4.2 2.7 H3.1 V4.9 H1.3 V2.7 H0.2 Z" fill="#ea6450"/></svg>
<span class="t" style="left:14.80px;top:135.87px;font-size:7px;line-height:8.40px;color:#222;transform:scaleX(0.9400);">USDRUB</span>
<span class="t" style="left:77.33px;top:135.50px;font-size:7.4px;line-height:8.88px;color:#d4504a;">73.51200</span>
<span class="t" style="left:114.53px;top:135.50px;font-size:7.4px;line-height:8.88px;color:#d4504a;">73.53100</span>
<svg width="6" height="7" style="left:5.2px;top:148.62px"><path d="M2.2 0.3 L4.2 2.7 H3.1 V4.9 H1.3 V2.7 H0.2 Z" fill="#38b838"/></svg>
<span class="t" style="left:14.80px;top:147.87px;font-size:7px;line-height:8.40px;color:#222;transform:scaleX(0.9400);">AUDUSD</span>
<span class="t" style="left:82.00px;top:147.50px;font-size:7.4px;line-height:8.88px;color:#4a4ac4;">0.77211</span>
<span class="t" style="left:118.65px;top:147.50px;font-size:7.4px;line-height:8.88px;color:#4a4ac4;">0.77219</span>
<div class="b " style="left:2.00px;top:157.99px;width:146.80px;height:12.30px;background:#ebebeb"></div>
<svg width="6" height="7" style="left:5.2px;top:160.89px"><path d="M2.2 0.3 L4.2 2.7 H3.1 V4.9 H1.3 V2.7 H0.2 Z" fill="#ea6450"/></svg>
<span class="t" style="left:14.80px;top:160.87px;font-size:7px;line-height:8.40px;color:#222;transform:scaleX(0.9400);">NZDUSD</span>
<span class="t" style="left:81.45px;top:160.50px;font-size:7.4px;line-height:8.88px;color:#d4504a;">0.72158</span>
<span class="t" style="left:118.65px;top:160.50px;font-size:7.4px;line-height:8.88px;color:#4a4ac4;">0.72162</span>
<svg width="6" height="7" style="left:5.2px;top:173.16px"><path d="M2.2 0.3 L4.2 2.7 H3.1 V4.9 H1.3 V2.7 H0.2 Z" fill="#ea6450"/></svg>
<span class="t" style="left:14.80px;top:172.87px;font-size:7px;line-height:8.40px;color:#222;transform:scaleX(0.9400);">USDCAD</span>
<span class="t" style="left:81.45px;top:172.50px;font-size:7.4px;line-height:8.88px;color:#4a4ac4;">1.20833</span>
<span class="t" style="left:118.65px;top:172.50px;font-size:7.4px;line-height:8.88px;color:#d4504a;">1.20837</span>
<div class="b " style="left:2.00px;top:182.53px;width:146.80px;height:12.30px;background:#ebebeb"></div>
<svg width="6" height="7" style="left:5.2px;top:185.43px"><path d="M2.2 0.3 L4.2 2.7 H3.1 V4.9 H1.3 V2.7 H0.2 Z" fill="#38b838"/></svg>
<span class="t" style="left:14.80px;top:184.87px;font-size:7px;line-height:8.40px;color:#222;transform:scaleX(0.9400);">USDSEK</span>
<span class="t" style="left:81.45px;top:184.50px;font-size:7.4px;line-height:8.88px;color:#d4504a;">8.29190</span>
<span class="t" style="left:118.65px;top:184.50px;font-size:7.4px;line-height:8.88px;color:#4a4ac4;">8.29402</span>
<div class="b " style="left:74.40px;top:59.00px;width:0.50px;height:135.60px;background:#e6e6e6"></div>
<div class="b " style="left:111.30px;top:59.00px;width:0.50px;height:135.60px;background:#e6e6e6"></div>
<svg width="6" height="6" style="left:5.6px;top:198.4px"><path d="M2.8 0.4 V5.2 M0.4 2.8 H5.2" stroke="#48b848" stroke-width="1.2"/></svg>
<span class="t" style="left:14.80px;top:197.87px;font-size:7px;line-height:8.40px;color:#8a8a8a;transform:scaleX(0.9792);">click to add...</span>
<span class="t" style="left:118.65px;top:197.50px;font-size:7.4px;line-height:8.88px;color:#8a8a8a;">10 / 131</span>
<div class="b " style="left:1.40px;top:221.00px;width:147.40px;height:13.40px;background:#f6f6f6"></div>
<div class="b " style="left:0.00px;top:234.40px;width:151.00px;height:3.60px;background:#f0f0f0"></div>
<div class="b " style="left:42.00px;top:221.00px;width:106.80px;height:0.70px;background:#8c8c8c"></div>
<div class="b " style="left:3.20px;top:220.60px;width:39.20px;height:13.60px;background:#fff;border:0.8px solid #666;border-top:none"></div>
<span class="t" style="left:8.40px;top:223.69px;font-size:7.2px;line-height:8.64px;color:#222;">Symbols</span>
<span class="t" style="left:48.60px;top:223.69px;font-size:7.2px;line-height:8.64px;color:#8a8a8a;transform:scaleX(0.9814);">Details</span>
<span class="t" style="left:83.00px;top:223.69px;font-size:7.2px;line-height:8.64px;color:#8a8a8a;transform:scaleX(0.9774);">Trading</span>
<span class="t" style="left:120.00px;top:223.69px;font-size:7.2px;line-height:8.64px;color:#8a8a8a;transform:scaleX(0.9074);">Ticks</span>
<div class="b " style="left:77.00px;top:223.60px;width:0.60px;height:8.80px;background:#b4b4b4"></div>
<div class="b " style="left:114.00px;top:223.60px;width:0.60px;height:8.80px;background:#b4b4b4"></div>
<div class="b " style="left:1.40px;top:237.60px;width:147.40px;height:172.00px;background:#fff;border-left:0.7px solid #c8c8c8"></div>
<div class="b " style="left:1.40px;top:237.60px;width:147.40px;height:9.70px;background:linear-gradient(90deg,#c9d6e8,#dde8f4)"></div>
<span class="t" style="left:2.40px;top:239.06px;font-size:6.8px;line-height:8.16px;color:#1c2430;transform:scaleX(0.9277);">Navigator</span>
<svg width="6" height="6" style="left:143.2px;top:240.2px"><path d="M1 1 L4.6 4.6 M4.6 1 L1 4.6" stroke="#222" stroke-width="1"/></svg>
<svg width="30" height="120" style="left:0;top:250px"><path d="M8.4 9 V109.4 M8.4 15.3 H16 M8.4 27.1 H16 M8.4 39.1 H16 M8.4 51 H16 M8.4 62.6 H16 M8.4 74.2 H16 M8.4 86 H16 M8.4 97.5 H16 M8.4 109.3 H16" stroke="#b8b8b8" stroke-width="0.6" stroke-dasharray="0.6 0.6" fill="none"/><rect x="6.4" y="13.3" width="4" height="4" fill="#fff" stroke="#999" stroke-width="0.5"/><path d="M7.3 15.3 h2.2 M8.4 14.2 v2.2" stroke="#444" stroke-width="0.5"/><rect x="6.4" y="25.1" width="4" height="4" fill="#fff" stroke="#999" stroke-width="0.5"/><path d="M7.3 27.1 h2.2 M8.4 26.0 v2.2" stroke="#444" stroke-width="0.5"/><rect x="6.4" y="37.1" width="4" height="4" fill="#fff" stroke="#999" stroke-width="0.5"/><path d="M7.3 39.1 h2.2 M8.4 38.0 v2.2" stroke="#444" stroke-width="0.5"/><rect x="6.4" y="49.0" width="4" height="4" fill="#fff" stroke="#999" stroke-width="0.5"/><path d="M7.3 51.0 h2.2 M8.4 49.9 v2.2" stroke="#444" stroke-width="0.5"/><rect x="6.4" y="60.6" width="4" height="4" fill="#fff" stroke="#999" stroke-width="0.5"/><path d="M7.3 62.6 h2.2 M8.4 61.5 v2.2" stroke="#444" stroke-width="0.5"/></svg>
<svg width="12" height="10" style="left:3.6px;top:248.8px"><rect x="2.6" y="0.6" width="8" height="6.4" fill="#9cc4ee" stroke="#3b78c4" stroke-width="0.7"/><rect x="0.6" y="2.6" width="8.4" height="6.6" fill="#fff" stroke="#3b78c4" stroke-width="0.8"/><rect x="0.6" y="2.6" width="8.4" height="1.6" fill="#3b78c4"/><path d="M2 8 q1.5 -2.6 3 -1.2 t2.6 -1" stroke="#e0603a" stroke-width="0.7" fill="none"/></svg>
<span class="t" style="left:17.80px;top:249.59px;font-size:7.3px;line-height:8.76px;color:#222;transform:scaleX(1.0144);">MetaTrader</span>
<svg width="11" height="10" style="left:16.8px;top:260.30px"><circle cx="3.6" cy="2.8" r="2" fill="#4cae3c"/><path d="M0.4 9 q0 -4 3.2 -4 t3.2 4 z" fill="#4cae3c"/><circle cx="7.4" cy="3.4" r="1.9" fill="#5fc44e"/><path d="M4.4 9.4 q0 -3.8 3 -3.8 t3 3.8 z" fill="#5fc44e"/></svg>
<span class="t" style="left:31.00px;top:261.59px;font-size:7.3px;line-height:8.76px;color:#222;transform:scaleX(0.9658);">Accounts</span>
<svg width="11" height="10" style="left:16.8px;top:272.10px"><rect x="0.6" y="0.8" width="9" height="7.6" rx="0.8" fill="#eaf3fc" stroke="#4f8fd0" stroke-width="0.8"/><path d="M2 4 h3 M2 6 h2" stroke="#4f8fd0" stroke-width="0.7"/><circle cx="7.6" cy="7" r="2.6" fill="#4cae3c"/><path d="M6.4 7 a1.3 1.3 0 1 0 1.3 -1.3" stroke="#fff" stroke-width="0.6" fill="none"/></svg>
<span class="t" style="left:31.00px;top:273.59px;font-size:7.3px;line-height:8.76px;color:#222;transform:scaleX(0.9630);">Subscriptions</span>
<svg width="11" height="10" style="left:16.8px;top:284.10px"><rect x="0.8" y="0.6" width="8.6" height="8.8" rx="1" fill="#f4c430" stroke="#c8960c" stroke-width="0.7"/><text x="3.2" y="7.6" font-size="7" font-style="italic" font-weight="bold" fill="#3a2a00" font-family="Liberation Serif, serif">f</text></svg>
<span class="t" style="left:31.00px;top:285.59px;font-size:7.3px;line-height:8.76px;color:#222;transform:scaleX(0.9795);">Indicators</span>
<svg width="11" height="10" style="left:16.8px;top:296.00px"><path d="M1.4 2.6 L5 0.6 L8.6 2.6 L5 4.4 Z" fill="#2c4c8c"/><circle cx="5" cy="4.8" r="2" fill="#e8c8a0"/><path d="M1.4 9.6 q0 -3.4 3.6 -3.4 t3.6 3.4 z" fill="#3a66b0"/><circle cx="8.2" cy="8" r="1.7" fill="#f0c030" stroke="#a07808" stroke-width="0.4"/></svg>
<span class="t" style="left:31.00px;top:297.59px;font-size:7.3px;line-height:8.76px;color:#222;transform:scaleX(0.9760);">Expert Advisors</span>
<svg width="11" height="10" style="left:16.8px;top:307.60px"><path d="M1.4 0.8 h6.4 v7.6 h-6.4 z" fill="#f4d050" stroke="#c8960c" stroke-width="0.7"/><path d="M2.6 3 h4 M2.6 5 h4" stroke="#a07808" stroke-width="0.6"/><circle cx="8" cy="8" r="1.8" fill="#f8e080" stroke="#a07808" stroke-width="0.5"/></svg>
<span class="t" style="left:31.00px;top:308.59px;font-size:7.3px;line-height:8.76px;color:#222;transform:scaleX(0.9413);">Scripts</span>
<svg width="11" height="10" style="left:16.8px;top:319.20px"><circle cx="4" cy="4" r="3" fill="none" stroke="#3a7ad0" stroke-width="1.6"/><circle cx="4" cy="4" r="1" fill="#3a7ad0"/><circle cx="7.6" cy="7.6" r="1.8" fill="none" stroke="#2a5cb0" stroke-width="1.1"/></svg>
<span class="t" style="left:31.00px;top:320.59px;font-size:7.3px;line-height:8.76px;color:#222;transform:scaleX(0.9288);">Services</span>
<svg width="11" height="10" style="left:16.8px;top:331.00px"><path d="M3 3.6 v-1 q0 -2 2 -2 t2 2 v1" stroke="#a07808" stroke-width="0.8" fill="none"/><rect x="1" y="3.2" width="8" height="6.4" rx="0.6" fill="#f0c030" stroke="#c8960c" stroke-width="0.6"/><rect x="3.4" y="5.4" width="3.2" height="4" fill="#3a9a5a"/></svg>
<span class="t" style="left:31.00px;top:331.59px;font-size:7.3px;line-height:8.76px;color:#222;transform:scaleX(1.0130);">Market</span>
<svg width="11" height="10" style="left:16.8px;top:342.60px"><path d="M1.2 6 a4 4 0 1 1 7.8 0" stroke="#5a9ae0" stroke-width="0.9" fill="none"/><path d="M3 5.8 a2.2 2.2 0 1 1 4.2 0" stroke="#5a9ae0" stroke-width="0.8" fill="none"/><path d="M4 9.6 v-3 M6.2 9.6 v-4.4" stroke="#3aa63a" stroke-width="1.3"/></svg>
<span class="t" style="left:31.00px;top:343.59px;font-size:7.3px;line-height:8.76px;color:#222;transform:scaleX(0.9355);">Signals</span>
<svg width="11" height="10" style="left:16.8px;top:354.30px"><path d="M2 5 a3 3 0 0 1 5.6 -1.4 a2 2 0 0 1 1.6 3.4 h-7.4 a1.6 1.6 0 0 1 0.2 -2 z" fill="#4fa8d8" stroke="#2a78a8" stroke-width="0.5"/><rect x="2" y="5.4" width="6.4" height="3.6" fill="#2c5a4c" stroke="#1c3a30" stroke-width="0.4"/><path d="M3 6.6 h4.4 M3 7.8 h4.4" stroke="#8fd8b0" stroke-width="0.4"/></svg>
<span class="t" style="left:31.00px;top:355.59px;font-size:7.3px;line-height:8.76px;color:#222;transform:scaleX(0.8489);">VPS</span>
<div class="b " style="left:0.00px;top:409.60px;width:151.00px;height:17.40px;background:#f0f0f0"></div>
<div class="b " style="left:46.00px;top:409.40px;width:103.00px;height:0.70px;background:#8c8c8c"></div>
<div class="b " style="left:3.20px;top:409.20px;width:43.00px;height:12.70px;background:#fff;border:0.8px solid #666;border-top:none"></div>
<span class="t" style="left:9.20px;top:411.69px;font-size:7.2px;line-height:8.64px;color:#222;transform:scaleX(1.0202);">Common</span>
<span class="t" style="left:52.00px;top:411.69px;font-size:7.2px;line-height:8.64px;color:#8a8a8a;transform:scaleX(0.9727);">Favorites</span>
<div class="b " style="left:151.00px;top:410.90px;width:873.00px;height:16.10px;background:#f0f0f0"></div>
<div class="b " style="left:151.00px;top:410.90px;width:873.00px;height:0.70px;background:#fafafa"></div>
<div class="b " style="left:0.00px;top:424.00px;width:1024.00px;height:0.60px;background:#fafafa"></div>
<div class="b " style="left:260.20px;top:410.90px;width:53.40px;height:13.00px;background:#fff;border:0.8px solid #555;border-top:none"></div>
<span class="t" style="left:158.80px;top:415.50px;font-size:7.4px;line-height:8.88px;color:#8a8a8a;transform:scaleX(0.9315);">EURUSD.M1</span>
<span class="t" style="left:213.40px;top:415.50px;font-size:7.4px;line-height:8.88px;color:#8a8a8a;transform:scaleX(0.9391);">USDCHF.H1</span>
<span class="t" style="left:267.60px;top:415.50px;font-size:7.4px;line-height:8.88px;color:#111;transform:scaleX(0.8932);">GBPUSD.H1</span>
<span class="t" style="left:321.00px;top:415.50px;font-size:7.4px;line-height:8.88px;color:#8a8a8a;transform:scaleX(0.8854);">USDJPY.H1</span>
<span class="t" style="left:369.80px;top:415.50px;font-size:7.4px;line-height:8.88px;color:#8a8a8a;transform:scaleX(0.8979);">EURUSD.H1</span>
<div class="b " style="left:206.50px;top:414.00px;width:0.60px;height:9.00px;background:#b4b4b4"></div>
<div class="b " style="left:363.40px;top:414.00px;width:0.60px;height:9.00px;background:#b4b4b4"></div>
<svg width="24" height="8" style="left:998px;top:414px"><path d="M5 1.6 L2.6 4 L5 6.4 Z M17 1.6 L19.4 4 L17 6.4 Z" fill="#b0b0b0"/></svg>
<div class="b menu" style="left:65.60px;top:10.60px;width:63.00px;height:57.20px;"></div>
<div class="b hl" style="left:67.30px;top:11.90px;width:60.90px;height:13.20px;"></div>
<span class="t" style="left:85.00px;top:14.40px;font-size:7.5px;line-height:9.00px;color:#fff;transform:scaleX(0.9657);">Indicators</span>
<svg width="4" height="6" style="left:122.6px;top:14.55px"><path d="M0.6 0.6 L3 2.8 L0.6 5 Z" fill="#fff"/></svg>
<span class="t" style="left:85.00px;top:28.40px;font-size:7.5px;line-height:9.00px;color:#1a1a1a;transform:scaleX(0.9439);">Objects</span>
<svg width="4" height="6" style="left:122.6px;top:28.30px"><path d="M0.6 0.6 L3 2.8 L0.6 5 Z" fill="#111"/></svg>
<span class="t" style="left:85.00px;top:42.40px;font-size:7.5px;line-height:9.00px;color:#1a1a1a;transform:scaleX(0.9124);">Experts</span>
<svg width="4" height="6" style="left:122.6px;top:42.05px"><path d="M0.6 0.6 L3 2.8 L0.6 5 Z" fill="#111"/></svg>
<span class="t" style="left:85.00px;top:55.40px;font-size:7.5px;line-height:9.00px;color:#1a1a1a;transform:scaleX(0.9336);">Scripts</span>
<svg width="4" height="6" style="left:122.6px;top:55.80px"><path d="M0.6 0.6 L3 2.8 L0.6 5 Z" fill="#111"/></svg>
<div class="b menu" style="left:128.40px;top:10.60px;width:158.20px;height:146.50px;box-shadow:0.5px 1.8px 2px rgba(0,0,0,0.3)"></div>
<span class="t" style="left:147.80px;top:14.40px;font-size:7.5px;line-height:9.00px;color:#1a1a1a;transform:scaleX(0.9403);">Williams&#39; Percent Range</span>
<span class="t" style="left:147.80px;top:28.40px;font-size:7.5px;line-height:9.00px;color:#1a1a1a;transform:scaleX(0.9525);">Volumes</span>
<span class="t" style="left:147.80px;top:42.40px;font-size:7.5px;line-height:9.00px;color:#1a1a1a;transform:scaleX(0.9674);">Variable Index Dynamic Average</span>
<span class="t" style="left:147.80px;top:55.40px;font-size:7.5px;line-height:9.00px;color:#1a1a1a;transform:scaleX(0.9750);">Triple Exponential Moving Average</span>
<span class="t" style="left:147.80px;top:69.40px;font-size:7.5px;line-height:9.00px;color:#1a1a1a;transform:scaleX(0.9571);">Triple Exponential Average</span>
<div class="b " style="left:130.00px;top:83.50px;width:154.60px;height:0.60px;background:#d0d0d0"></div>
<div class="b hl" style="left:129.70px;top:87.00px;width:153.90px;height:13.70px;"></div>
<span class="t" style="left:147.80px;top:89.40px;font-size:7.5px;line-height:9.00px;color:#fff;transform:scaleX(0.9423);">Trend</span>
<svg width="4" height="6" style="left:278px;top:89.80px"><path d="M0.6 0.6 L3 2.8 L0.6 5 Z" fill="#fff"/></svg>
<span class="t" style="left:147.80px;top:103.40px;font-size:7.5px;line-height:9.00px;color:#1a1a1a;transform:scaleX(0.9598);">Oscillators</span>
<svg width="4" height="6" style="left:278px;top:103.50px"><path d="M0.6 0.6 L3 2.8 L0.6 5 Z" fill="#111"/></svg>
<span class="t" style="left:147.80px;top:117.40px;font-size:7.5px;line-height:9.00px;color:#1a1a1a;transform:scaleX(0.9525);">Volumes</span>
<svg width="4" height="6" style="left:278px;top:117.20px"><path d="M0.6 0.6 L3 2.8 L0.6 5 Z" fill="#111"/></svg>
<span class="t" style="left:147.80px;top:131.40px;font-size:7.5px;line-height:9.00px;color:#1a1a1a;transform:scaleX(0.9200);">Bill Williams</span>
<svg width="4" height="6" style="left:278px;top:130.90px"><path d="M0.6 0.6 L3 2.8 L0.6 5 Z" fill="#111"/></svg>
<span class="t" style="left:147.80px;top:144.40px;font-size:7.5px;line-height:9.00px;color:#1a1a1a;transform:scaleX(0.9675);">Custom</span>
<svg width="4" height="6" style="left:278px;top:144.60px"><path d="M0.6 0.6 L3 2.8 L0.6 5 Z" fill="#111"/></svg>
<div class="b " style="left:286.00px;top:10.60px;width:1.00px;height:74.60px;background:linear-gradient(90deg,rgba(90,90,90,0.25),rgba(70,70,70,0.85))"></div>
<div class="b menu" style="left:284.00px;top:85.00px;width:175.00px;height:183.40px;"></div>
<span class="t" style="left:302.70px;top:89.40px;font-size:7.5px;line-height:9.00px;color:#1a1a1a;transform:scaleX(0.9939);">Adaptive Moving Average</span>
<span class="t" style="left:302.70px;top:103.40px;font-size:7.5px;line-height:9.00px;color:#1a1a1a;transform:scaleX(0.9850);">Average Directional Movement Index</span>
<span class="t" style="left:302.70px;top:117.40px;font-size:7.5px;line-height:9.00px;color:#1a1a1a;transform:scaleX(0.9844);">Average Directional Movement Index Wilder</span>
<span class="t" style="left:302.70px;top:131.40px;font-size:7.5px;line-height:9.00px;color:#1a1a1a;transform:scaleX(0.9517);">Bollinger Bands</span>
<span class="t" style="left:302.70px;top:145.40px;font-size:7.5px;line-height:9.00px;color:#1a1a1a;transform:scaleX(0.9844);">Double Exponential Moving Average</span>
<span class="t" style="left:302.70px;top:159.40px;font-size:7.5px;line-height:9.00px;color:#1a1a1a;transform:scaleX(0.9222);">Envelopes</span>
<span class="t" style="left:302.70px;top:172.40px;font-size:7.5px;line-height:9.00px;color:#1a1a1a;transform:scaleX(0.9871);">Fractal Adaptive Moving Average</span>
<span class="t" style="left:302.70px;top:186.40px;font-size:7.5px;line-height:9.00px;color:#1a1a1a;transform:scaleX(0.9852);">Ichimoku Kinko Hyo</span>
<span class="t" style="left:302.70px;top:200.40px;font-size:7.5px;line-height:9.00px;color:#1a1a1a;">Moving Average</span>
<span class="t" style="left:302.70px;top:214.40px;font-size:7.5px;line-height:9.00px;color:#1a1a1a;transform:scaleX(0.9062);">Parabolic SAR</span>
<span class="t" style="left:302.70px;top:228.40px;font-size:7.5px;line-height:9.00px;color:#1a1a1a;transform:scaleX(0.9719);">Standard Deviation</span>
<span class="t" style="left:302.70px;top:242.40px;font-size:7.5px;line-height:9.00px;color:#1a1a1a;transform:scaleX(0.9741);">Triple Exponential Moving Average</span>
<span class="t" style="left:302.70px;top:255.40px;font-size:7.5px;line-height:9.00px;color:#1a1a1a;transform:scaleX(0.9619);">Variable Index Dynamic Average</span>
</body></html>
